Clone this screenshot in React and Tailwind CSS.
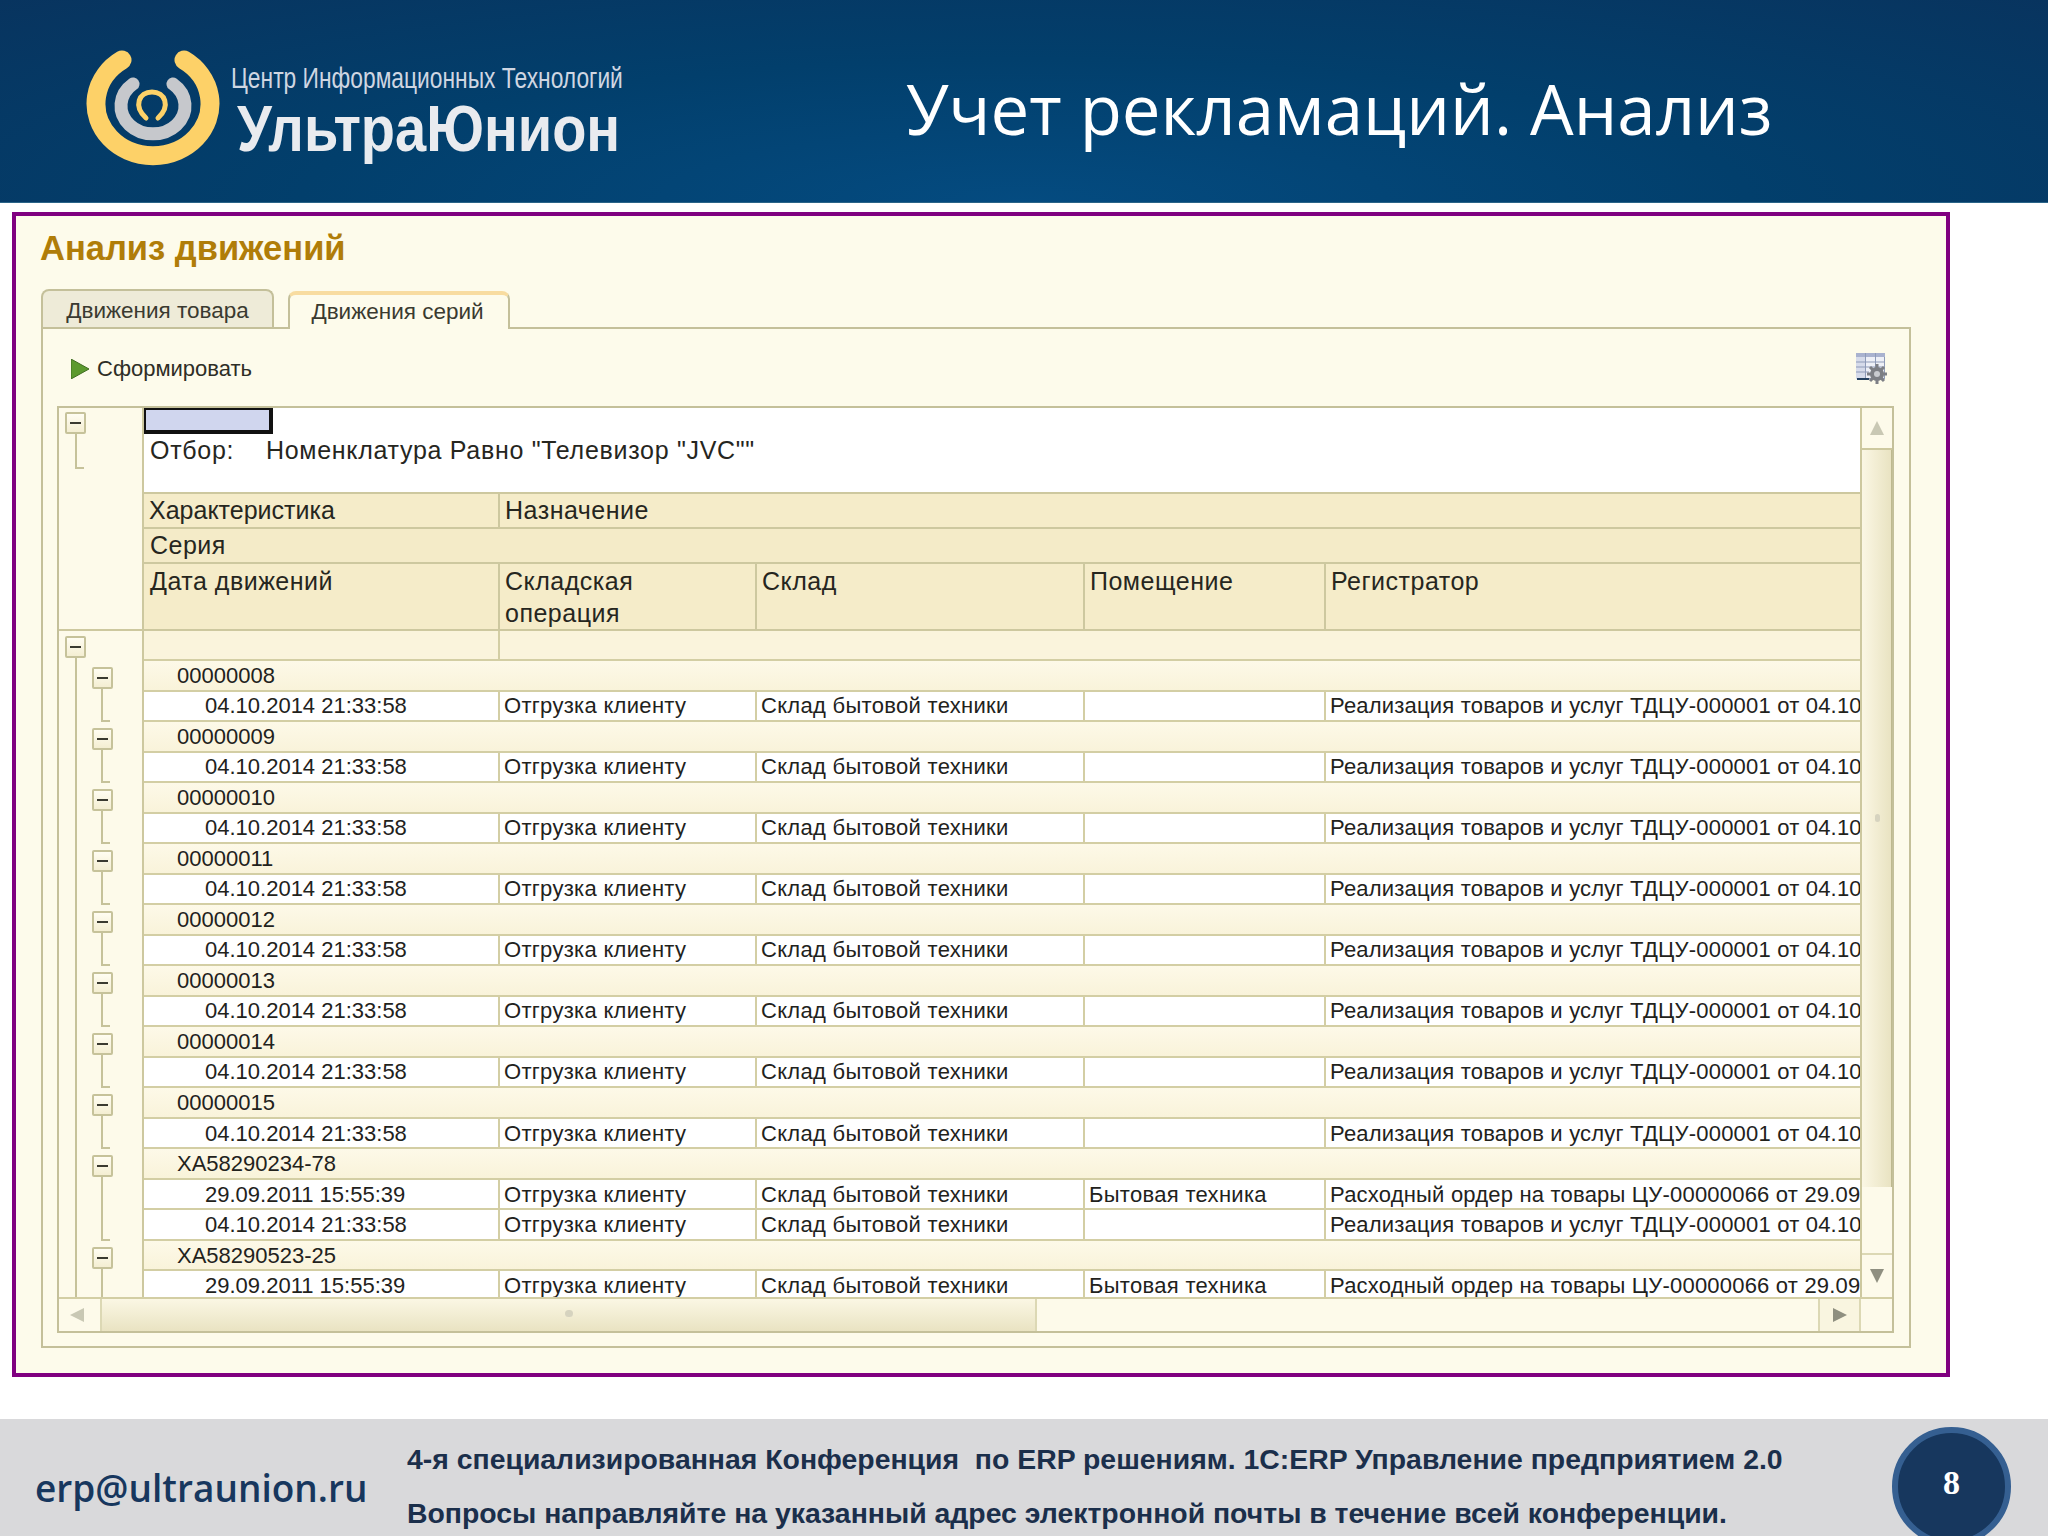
const arial = { fontFamily: '"Liberation Sans", Arial, sans-serif' }

const groups = ['00000008', '00000009', '00000010', '00000011', '00000012', '00000013', '00000014', '00000015']

const shipment = {
  date: '04.10.2014 21:33:58',
  place: '',
  doc: 'Реализация товаров и услуг ТДЦУ-000001 от 04.10.2014 21:33:58',
}
const order = {
  date: '29.09.2011 15:55:39',
  place: 'Бытовая техника',
  doc: 'Расходный ордер на товары ЦУ-00000066 от 29.09.2011 15:55:39',
}

function MinusBox({ className }) {
  return (
    <div className={`absolute z-10 w-[21px] h-[22px] rounded-[2px] border-2 border-[#c6c29a] bg-gradient-to-b from-[#fffdf2] to-[#f4eed2] flex items-center justify-center ${className}`}>
      <div className="w-[11px] h-[2px] bg-[#3a3a30]" />
    </div>
  )
}

// tree gutter of one row: outer level line plus the inner box or line
function TreeCell({ kind, last }) {
  return (
    <div className="relative w-[85px] shrink-0 h-full bg-[#fdfaea] border-r-2 border-[#cdc89f]">
      <div className="absolute left-[16px] top-0 bottom-0 w-[2px] bg-[#c6c29a]" />
      {kind === 'group' && (
        <>
          <div className="absolute left-[42px] top-[16px] bottom-0 w-[2px] bg-[#c6c29a]" />
          <MinusBox className="left-[33px] top-[6px]" />
        </>
      )}
      {kind === 'row' && <div className="absolute left-[42px] top-0 bottom-0 w-[2px] bg-[#c6c29a]" />}
      {kind === 'row' && last && (
        <div className="absolute left-[42px] bottom-0 w-[9px] h-[2px] bg-[#c6c29a]" />
      )}
    </div>
  )
}

function GroupRow({ name }) {
  return (
    <div className="flex h-[30.53px] shrink-0">
      <TreeCell kind="group" />
      <div className="flex-1 min-w-0 flex items-center pl-[33px] bg-gradient-to-b from-[#fdf9e8] to-[#f9f3da] border-b-2 border-[#d3cea4] text-[22px] text-[#22221c]">
        {name}
      </div>
    </div>
  )
}

function DataRow({ row, last }) {
  const cell = 'h-full flex items-center pl-[4px] border-r-2 border-[#d3cea4] overflow-hidden whitespace-nowrap tracking-[0.3px]'
  return (
    <div className="flex h-[30.53px] shrink-0">
      <TreeCell kind="row" last={last} />
      <div className="flex-1 min-w-0 flex bg-white border-b-2 border-[#d3cea4] text-[22px] text-[#22221c]">
        <div className="h-full w-[356px] flex items-center pl-[61px] border-r-2 border-[#d3cea4] whitespace-nowrap">{row.date}</div>
        <div className={`${cell} w-[257px]`}>Отгрузка клиенту</div>
        <div className={`${cell} w-[328px]`}>Склад бытовой техники</div>
        <div className={`${cell} w-[241px]`}>{row.place}</div>
        <div className="h-full flex-1 min-w-0 flex items-center pl-[4px] overflow-hidden whitespace-nowrap tracking-[0.2px]">{row.doc}</div>
      </div>
    </div>
  )
}

function HeaderBlock() {
  const head = 'text-[25px] text-[#26261e]'
  const spaced = `${head} tracking-[0.5px]`
  return (
    <div className="flex h-[223px] shrink-0">
      <div className="relative w-[85px] shrink-0 bg-[#fdfaea] border-r-2 border-b-2 border-[#cdc89f]">
        <MinusBox className="left-[6px] top-[4px]" />
        <div className="absolute left-[16px] top-[26px] h-[35px] w-[2px] bg-[#c6c29a]" />
        <div className="absolute left-[16px] top-[59px] w-[9px] h-[2px] bg-[#c6c29a]" />
      </div>
      <div className="flex-1 min-w-0 flex flex-col">
        <div className="h-[86px] bg-white border-b-2 border-[#cdc89f] relative shrink-0">
          <div className="w-[129px] h-[26px] bg-[#d0d6ee] border-t-2 border-l-2 border-[#111] border-r-4 border-b-4" />
          <div className="flex text-[25px] tracking-[0.7px] text-[#26261e] pl-[6px] h-[32px] items-center mt-[1px]">
            <span className="w-[116px]">Отбор:</span>
            <span>Номенклатура Равно "Телевизор "JVC""</span>
          </div>
        </div>
        <div className="h-[35px] flex bg-[#f5ecc9] border-b-2 border-[#cdc89f] shrink-0">
          <div className={`${head} w-[356px] border-r-2 border-[#cdc89f] flex items-center pl-[5px] pt-px`}>Характеристика</div>
          <div className={`${spaced} flex items-center pl-[5px] pt-px`}>Назначение</div>
        </div>
        <div className={`${spaced} h-[35px] flex items-center pl-[6px] bg-[#f4ebc8] border-b-2 border-[#cdc89f] shrink-0`}>Серия</div>
        <div className="flex-1 flex bg-[#f5ecc9] border-b-2 border-[#cdc89f]">
          <div className={`${spaced} w-[356px] border-r-2 border-[#cdc89f] leading-[32px] pt-[1px] pl-[6px]`}>Дата движений</div>
          <div className={`${spaced} w-[257px] border-r-2 border-[#cdc89f] leading-[32px] pt-[1px] pl-[5px]`}>Складская<br />операция</div>
          <div className={`${spaced} w-[328px] border-r-2 border-[#cdc89f] leading-[32px] pt-[1px] pl-[5px]`}>Склад</div>
          <div className={`${spaced} w-[241px] border-r-2 border-[#cdc89f] leading-[32px] pt-[1px] pl-[5px]`}>Помещение</div>
          <div className={`${spaced} leading-[32px] pt-[1px] pl-[5px]`}>Регистратор</div>
        </div>
      </div>
    </div>
  )
}

function TotalRow() {
  return (
    <div className="flex h-[30px] shrink-0">
      <div className="relative w-[85px] shrink-0 bg-[#fdfaea] border-r-2 border-[#cdc89f]">
        <MinusBox className="left-[6px] top-[5px]" />
        <div className="absolute left-[16px] top-[26px] bottom-0 w-[2px] bg-[#c6c29a]" />
      </div>
      <div className="flex-1 flex bg-[#faf4dc] border-b-2 border-[#d3cea4]">
        <div className="w-[356px] border-r-2 border-[#d3cea4]" />
      </div>
    </div>
  )
}

function Arrow({ dir, tone = 'text-[#c9c8b4]' }) {
  const points = { up: '8,1 15,15 1,15', down: '1,1 15,1 8,15', left: '15,1 15,15 1,8', right: '1,1 15,8 1,15' }
  return (
    <svg width="16" height="16" viewBox="0 0 16 16" className={tone} aria-hidden="true">
      <polygon points={points[dir]} fill="currentColor" />
    </svg>
  )
}

function VScroll() {
  return (
    <div className="w-[32px] shrink-0 flex flex-col border-l-2 border-[#cdc89f] bg-[#fdfaea]">
      <div className="h-[42px] flex items-center justify-center border-b-2 border-[#cdc89f] shrink-0">
        <Arrow dir="up" />
      </div>
      <div className="h-[737px] shrink-0 relative bg-gradient-to-r from-[#fbf7e4] to-[#e9e3c2] border-r border-[#bdb98f]">
        <div className="absolute left-[13px] top-[364px] w-[5px] h-[8px] rounded-sm bg-[#d6d3bf]" />
      </div>
      <div className="flex-1 border-b-2 border-[#dcd8b4]" />
      <div className="h-[42px] flex items-center justify-center shrink-0">
        <Arrow dir="down" tone="text-[#8f8f80]" />
      </div>
    </div>
  )
}

function HScroll() {
  return (
    <div className="h-[34px] shrink-0 flex border-t-2 border-[#d3cea4] bg-[#fdfaea]">
      <div className="w-[43px] flex items-center justify-center border-r-2 border-[#dcd8b4] pr-[5px]">
        <Arrow dir="left" />
      </div>
      <div className="w-[935px] relative bg-gradient-to-b from-[#fbf7e4] to-[#e9e3c2] border-r-2 border-[#dcd8b4]">
        <div className="absolute left-[463px] top-[11px] w-[8px] h-[7px] rounded-sm bg-[#d6d3bf]" />
      </div>
      <div className="w-[781px]" />
      <div className="w-[43px] flex items-center justify-center border-l-2 border-r-2 border-[#dcd8b4] bg-[#f9f5e0]">
        <Arrow dir="right" tone="text-[#8f8f80]" />
      </div>
      <div className="flex-1" />
    </div>
  )
}

function TableSettingsIcon() {
  return (
    <svg width="32" height="31" viewBox="0 0 32 31" aria-hidden="true">
      <rect x="0.5" y="0.5" width="28" height="25" fill="#eef0f7" stroke="#8f9bb8" />
      <rect x="0" y="0" width="29" height="4" fill="#a9b2cf" />
      <rect x="0" y="4" width="9" height="22" fill="#d6dbea" />
      <path d="M9.5 0v26M19.5 0v15M0 9h29M0 14h29M0 19h13" stroke="#8f9bb8" strokeWidth="1" fill="none" />
      <path d="M1 26h12" stroke="#24405f" strokeWidth="2" />
      <circle cx="21" cy="21" r="7" fill="#7d7f85" />
      <path d="M21 11v20M11 21h20M14 14l14 14M28 14l-14 14" stroke="#7d7f85" strokeWidth="3" />
      <circle cx="21" cy="21" r="3" fill="#c9cbd0" />
    </svg>
  )
}

function Logo() {
  return (
    <svg width="134" height="121" viewBox="0 0 134 121" className="shrink-0" aria-hidden="true">
      <path d="M36 14 A 57 52 0 1 0 98 14" fill="none" stroke="#fdd168" strokeWidth="19" strokeLinecap="round" />
      <path d="M47 38 A 32 28 0 1 0 87 38" fill="none" stroke="#c6c8cc" strokeWidth="13" strokeLinecap="round" />
      <path d="M60 72 C 47 60 53 46 66 46 C 79 46 85 60 72 72" fill="none" stroke="#fdd168" strokeWidth="5" strokeLinecap="round" />
    </svg>
  )
}

export default function App() {
  return (
    <div className="w-[2048px] h-[1536px] bg-white flex flex-col overflow-hidden" style={arial}>
      {/* Slide header */}
      <header className="h-[203px] shrink-0 flex items-center border-b border-[#2a6488] bg-[radial-gradient(ellipse_at_50%_100%,#044b80_0%,#023f6c_50%,#08345f_100%)]">
        <div className="ml-[86px] mt-[11px] flex items-center gap-[11px] w-[820px]">
          <Logo />
          <div className="flex flex-col mt-[8px]">
            <span className="text-[30px] leading-[36px] text-[#cfd6e2] whitespace-nowrap origin-left scale-x-[0.76] font-light">Центр Информационных Технологий</span>
            <span className="text-[56px] leading-[66px] font-bold text-[#e9ebef] whitespace-nowrap ml-[6px] origin-left scale-y-[1.15]">УльтраЮнион</span>
          </div>
        </div>
        <h1 className="text-[69px] text-white whitespace-nowrap mt-[15px]" style={{ fontFamily: '"Open Sans", sans-serif' }}>
          Учет рекламаций. Анализ
        </h1>
      </header>

      {/* Framed 1C window */}
      <main className="ml-[12px] mt-[9px] w-[1938px] h-[1165px] shrink-0 border-4 border-[#800080] bg-[#fdfbeb] flex flex-col pl-[25px]">
        <h2 className="text-[34.5px] leading-[36px] font-bold text-[#b07d08] mt-[14px] ml-[-1px] shrink-0">Анализ движений</h2>
        <div className="flex items-end mt-[23px] h-[38px] shrink-0 gap-[14px] relative z-10">
          <div className="w-[233px] h-[38px] rounded-t-[8px] border-2 border-b-0 border-[#c4c09a] bg-[#eeebd8] text-[22.5px] text-[#3a3a30] flex items-center justify-center pt-[3px]">Движения товара</div>
          <div className="w-[222px] h-[38px] rounded-t-[8px] border-2 border-b-0 border-t-4 border-[#c4c09a] border-t-[#f8dca0] bg-[#fdfbeb] text-[22.5px] text-[#3a3a30] flex items-center justify-center -mb-[2px] pr-[3px]">Движения серий</div>
        </div>
        <div className="w-[1870px] h-[1021px] shrink-0 border-2 border-[#c4c09a] flex flex-col px-[14px]">
          <div className="h-[77px] shrink-0 flex items-center pr-[7px] pt-[2px]">
            <svg width="18" height="20" viewBox="0 0 18 20" className="ml-[14px]" aria-hidden="true">
              <polygon points="0,0 18,10 0,20" fill="#5c9a2e" stroke="#3f6d22" strokeWidth="1" />
            </svg>
            <span className="ml-[8px] text-[22px] text-[#2e2e26]">Сформировать</span>
            <div className="ml-auto"><TableSettingsIcon /></div>
          </div>
          <div className="w-[1837px] h-[927px] shrink-0 border-2 border-[#c4c09a] flex flex-col">
            <div className="flex flex-1 min-h-0">
              <div className="w-[1801px] shrink-0 flex flex-col overflow-hidden">
                <HeaderBlock />
                <TotalRow />
                {groups.map((name) => (
                  <div key={name} className="contents">
                    <GroupRow name={name} />
                    <DataRow row={shipment} last />
                  </div>
                ))}
                <GroupRow name="ХА58290234-78" />
                <DataRow row={order} />
                <DataRow row={shipment} last />
                <GroupRow name="ХА58290523-25" />
                <DataRow row={order} />
              </div>
              <VScroll />
            </div>
            <HScroll />
          </div>
        </div>
      </main>

      {/* Footer strip */}
      <footer className="mt-auto h-[117px] shrink-0 bg-[#d9d9db] flex relative overflow-hidden">
        <div className="w-[407px] shrink-0 pl-[35px] pt-[20px] flex items-center text-[37px] font-semibold text-[#17375e]" style={{ fontFamily: '"Open Sans", sans-serif' }}>
          erp@ultraunion.ru
        </div>
        <div className="w-[1485px] shrink-0 flex flex-col text-[28.4px] font-bold text-[#1b2f4b] pt-[23px] gap-[20px] leading-[34px]">
          <div className="whitespace-pre">4-я специализированная Конференция  по ERP решениям. 1С:ERP Управление предприятием 2.0</div>
          <div>Вопросы направляйте на указанный адрес электронной почты в течение всей конференции.</div>
        </div>
        <div className="w-[119px] h-[119px] shrink-0 mt-[8px] rounded-full bg-[#17375e] border-[6px] border-[#355f91] flex items-center justify-center text-white text-[34px] font-bold pb-[8px]" style={{ fontFamily: '"Liberation Serif", serif' }}>
          8
        </div>
      </footer>
    </div>
  )
}
